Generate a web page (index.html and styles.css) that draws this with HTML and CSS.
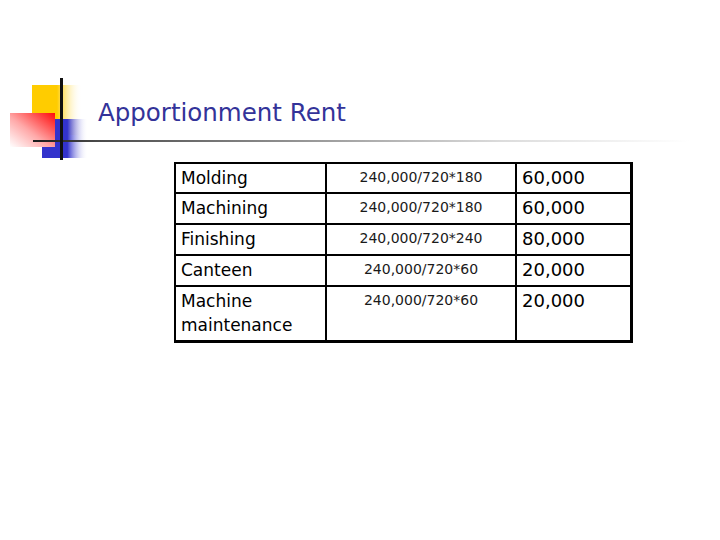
FILE: index.html
```html
<!DOCTYPE html>
<html>
<head>
<meta charset="utf-8">
<link rel="stylesheet" href="styles.css">
</head>
<body>
<div class="slide">
  <header class="header">
    <svg class="deco" width="98" height="82" viewBox="0 0 98 82" aria-hidden="true">
      <defs>
        <linearGradient id="gy" x1="0" y1="0" x2="1" y2="0">
          <stop offset="0" stop-color="#ffcc00"/>
          <stop offset="0.5" stop-color="#ffcc00"/>
          <stop offset="1" stop-color="#ffffff" stop-opacity="0"/>
        </linearGradient>
        <linearGradient id="gb" x1="0" y1="0" x2="1" y2="0">
          <stop offset="0" stop-color="#3333cc"/>
          <stop offset="0.55" stop-color="#3333cc"/>
          <stop offset="1" stop-color="#ffffff" stop-opacity="0"/>
        </linearGradient>
        <linearGradient id="gr" x1="0" y1="1" x2="1" y2="0">
          <stop offset="0" stop-color="#ffffff"/>
          <stop offset="0.45" stop-color="#ffa8a8"/>
          <stop offset="1" stop-color="#ff0a0a"/>
        </linearGradient>
        <linearGradient id="gl" x1="0" y1="0" x2="1" y2="0">
          <stop offset="0" stop-color="#1a1a1a"/>
          <stop offset="1" stop-color="#4a4a4a"/>
        </linearGradient>
      </defs>
      <rect x="32" y="7" width="50" height="50" fill="url(#gy)"/>
      <rect x="42" y="41" width="46" height="39" fill="url(#gb)"/>
      <rect x="10" y="35" width="45" height="34" fill="url(#gr)"/>
      <rect x="33" y="62" width="65" height="2" fill="url(#gl)"/>
      <rect x="60" y="0" width="3" height="82" fill="#111"/>
    </svg>
    <div class="title-area">
      <h1 class="title">Apportionment Rent</h1>
      <div class="rule"></div>
    </div>
  </header>
  <table class="rent">
    <colgroup>
      <col class="c1"><col class="c2"><col class="c3">
    </colgroup>
    <tr class="first"><td class="name">Molding</td><td class="calc">240,000/720*180</td><td class="val">60,000</td></tr>
    <tr><td class="name">Machining</td><td class="calc">240,000/720*180</td><td class="val">60,000</td></tr>
    <tr><td class="name">Finishing</td><td class="calc">240,000/720*240</td><td class="val">80,000</td></tr>
    <tr><td class="name">Canteen</td><td class="calc">240,000/720*60</td><td class="val">20,000</td></tr>
    <tr class="tall"><td class="name">Machine maintenance</td><td class="calc">240,000/720*60</td><td class="val">20,000</td></tr>
  </table>
</div>
</body>
</html>
```

FILE: styles.css
```css
html, body {
  margin: 0;
  padding: 0;
  background: #ffffff;
}

.slide {
  width: 720px;
  height: 540px;
  padding-top: 78px;
  box-sizing: border-box;
  font-family: "DejaVu Sans", Verdana, sans-serif;
}

.header {
  display: flex;
  align-items: flex-start;
  height: 82px;
}

.deco {
  display: block;
  flex: 0 0 98px;
}

.title-area {
  flex: 1;
  padding-top: 20px;
}

.title {
  margin: 0 0 0 0;
  font-weight: normal;
  font-size: 24.5px;
  line-height: 29px;
  color: #333399;
  height: 42px;
}

.rule {
  height: 2px;
  background: linear-gradient(to right, #4a4a4a 0%, #9a9a9a 35%, #dcdcdc 65%, #ffffff 95%);
}

.rent {
  margin: 2px 0 0 174px;
  border-collapse: collapse;
  table-layout: fixed;
  width: 456px;
  border-style: solid;
  border-color: #000;
  border-width: 2px 3px 3px 2px;
}

.c1 { width: 151px; }
.c2 { width: 190px; }
.c3 { width: 115px; }

.rent td {
  border: 2px solid #000;
  vertical-align: top;
  height: 26px;
  padding: 2px 5px 0 5px;
  color: #000;
}

.rent tr.first td {
  height: 25px;
}

.rent tr.tall td {
  height: 50px;
}

.name {
  font-size: 17px;
  line-height: 24px;
}

.rent td.calc {
  font-size: 14px;
  line-height: 20px;
  text-align: center;
  color: #1a1a1a;
  padding-top: 3px;
}

.val {
  font-size: 18px;
  line-height: 24px;
}
```
